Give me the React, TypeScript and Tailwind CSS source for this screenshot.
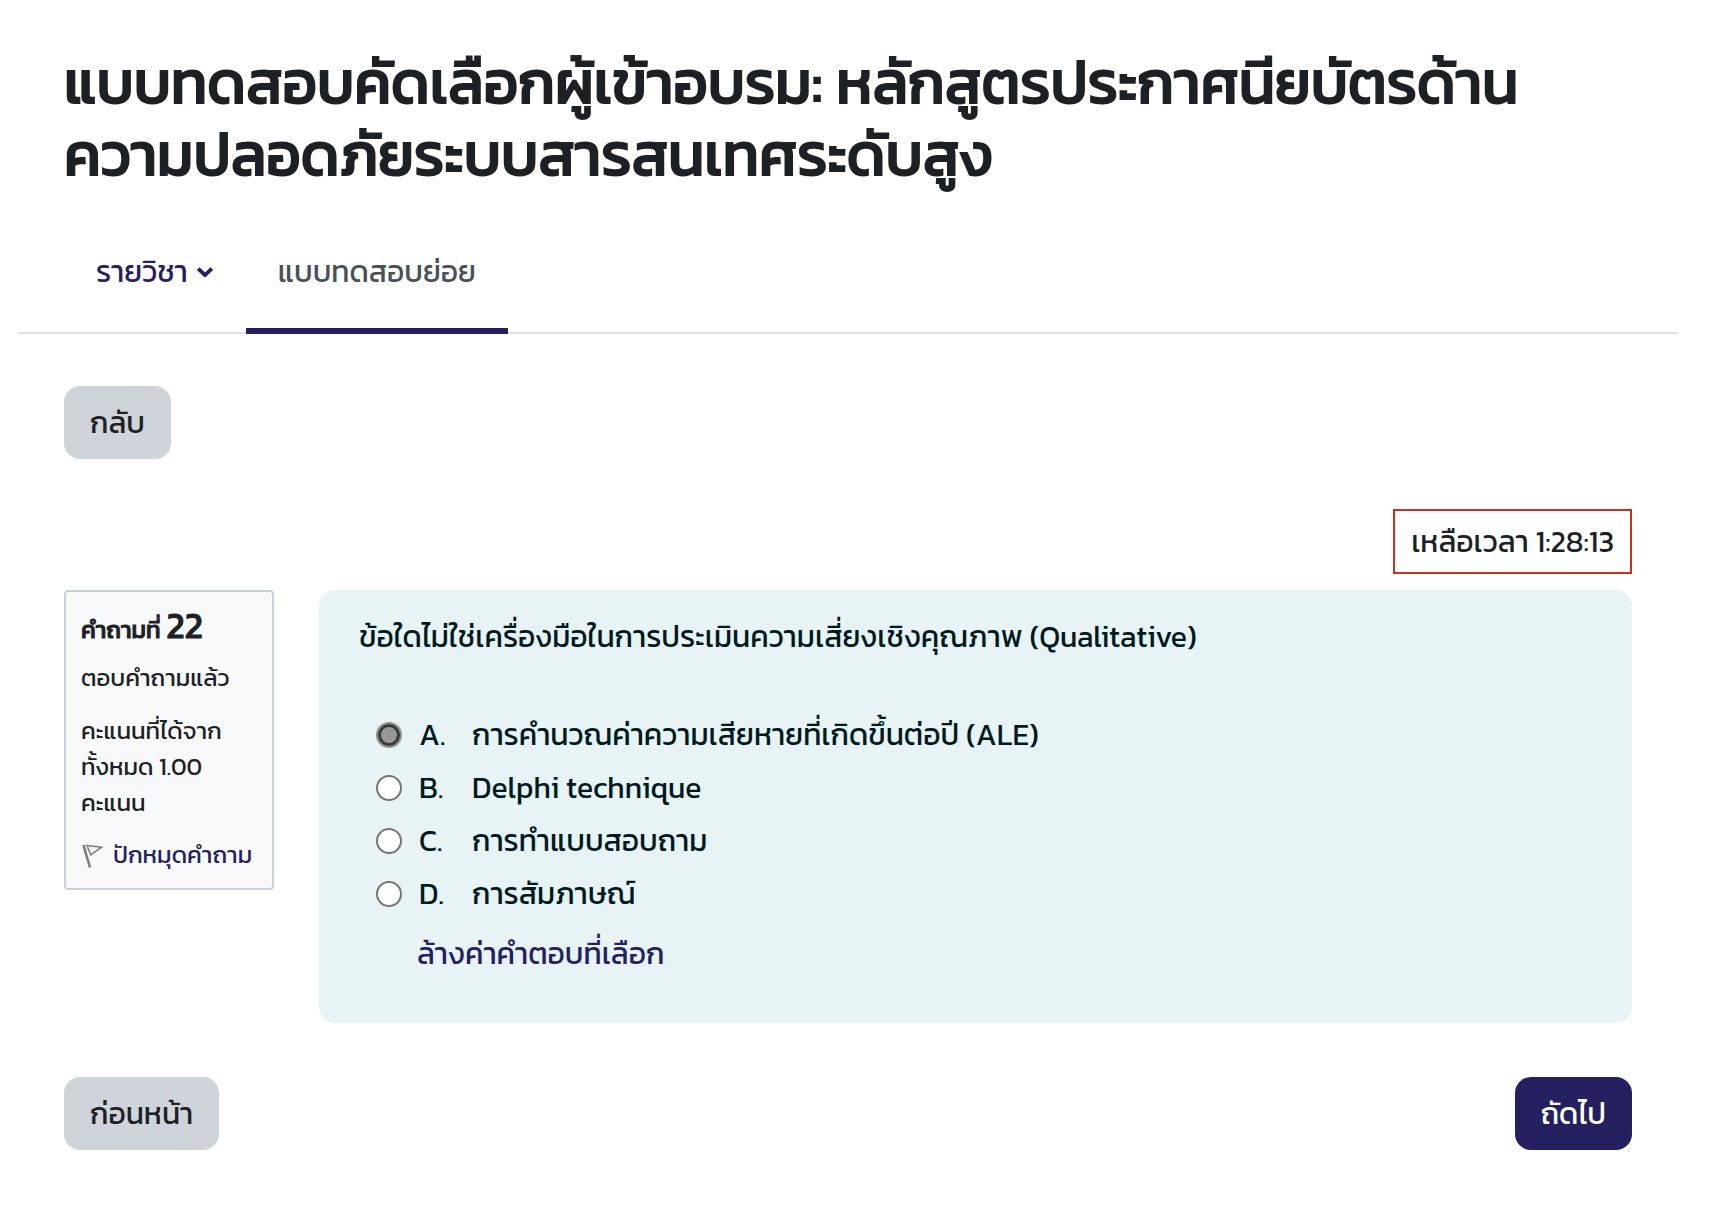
const answers = [
  { key: 'A', text: 'การคำนวณค่าความเสียหายที่เกิดขึ้นต่อปี (ALE)' },
  { key: 'B', text: 'Delphi technique' },
  { key: 'C', text: 'การทำแบบสอบถาม' },
  { key: 'D', text: 'การสัมภาษณ์' },
]

function ChevronIcon() {
  return (
    <svg width="18" height="18" viewBox="0 0 18 18" fill="none" stroke="currentColor" aria-hidden="true">
      <path d="M2.2 5.6 L9 12.2 L15.8 5.6" strokeWidth="3.8" strokeLinejoin="round" />
    </svg>
  )
}

function FlagIcon() {
  return (
    <svg width="24" height="26" viewBox="0 0 24 26" fill="none" stroke="#7d7d7d" aria-hidden="true">
      <path d="M2.4 3 L9 25.5" strokeWidth="2.6" />
      <path d="M4.4 3.2 L20.5 5.2 L9.8 12.8 L6.4 4.6" strokeWidth="1.6" />
    </svg>
  )
}

export default function App() {
  return (
    <div className="bg-white pb-20 font-['Kanit','Noto_Sans_Thai','Noto_Sans',sans-serif] text-[30px] leading-[45px] text-[#1d2125]">
      {/* Header */}
      <header className="mr-[90px] ml-16 pt-[46px]">
        <h1 className="text-[60px] leading-[72px] font-normal [-webkit-text-stroke:2px_#1d2125]">
          แบบทดสอบคัดเลือกผู้เข้าอบรม: หลักสูตรประกาศนียบัตรด้านความปลอดภัยระบบสารสนเทศระดับสูง
        </h1>
      </header>

      {/* Tabs */}
      <nav className="mr-11 ml-[18px] mt-[19px] flex border-b-2 border-[#dee2e6] pl-[46px]">
        <button type="button" className="-mb-0.5 flex h-[125px] items-center gap-2 px-8 text-[#25205f]">
          รายวิชา
          <ChevronIcon />
        </button>
        <a href="#quiz" className="-mb-0.5 flex h-[125px] items-center border-b-6 border-[#25205f] px-8 pt-1.5 text-[#495057]">
          แบบทดสอบย่อย
        </a>
      </nav>

      <main id="quiz" className="mr-[90px] ml-16 pt-[52px]">
        <button type="button" className="rounded-2xl bg-[#ced4da] px-[26px] py-3.5">
          กลับ
        </button>

        {/* Timer */}
        <div className="mt-[50px] mb-4 flex justify-end">
          <div className="border-2 border-[#ca3120] px-4 py-2">เหลือเวลา 1:28:13</div>
        </div>

        <div className="flex items-start gap-[45px]">
          {/* Question info */}
          <aside className="w-[210px] shrink-0 rounded border-2 border-[#cad0d7] bg-[#f8f9fa] p-[15px] text-2xl leading-9">
            <h2 className="mb-3 font-normal [-webkit-text-stroke:1px_#1d2125]">
              คำถามที่ <span className="text-4xl leading-9">22</span>
            </h2>
            <p className="mb-[17px]">ตอบคำถามแล้ว</p>
            <p className="mb-4">
              คะแนนที่ได้จาก
              <br />
              ทั้งหมด 1.00
              <br />
              คะแนน
            </p>
            <a href="#flag" className="flex items-center gap-2 whitespace-nowrap text-[#25205f]">
              <FlagIcon />
              ปักหมุดคำถาม
            </a>
          </aside>

          {/* Question */}
          <section className="grow rounded-2xl bg-[#e7f3f5] px-10 pt-6 pb-[47px] text-[#001a1e]">
            <fieldset>
              <legend className="mb-[53px]">ข้อใดไม่ใช่เครื่องมือในการประเมินความเสี่ยงเชิงคุณภาพ (Qualitative)</legend>
              <div className="flex flex-col gap-2 pl-[17px]">
                {answers.map(({ key, text }) => (
                  <label key={key} className="flex items-center gap-[17px]">
                    <input
                      type="radio"
                      name="answer"
                      value={key}
                      defaultChecked={key === 'A'}
                      className="h-[26px] w-[26px] shrink-0 appearance-none rounded-full border-2 border-[#767676] bg-white checked:border-[#8f8f8f] checked:bg-[#979797] checked:inset-ring-3 checked:inset-ring-[#3b3b3b]"
                    />
                    <span className="flex">
                      <span className="w-[53px]">{key}.</span>
                      {text}
                    </span>
                  </label>
                ))}
              </div>
            </fieldset>
            <a href="#clear" className="mt-[15px] ml-[58px] inline-block align-top text-[#25205f]">
              ล้างค่าคำตอบที่เลือก
            </a>
          </section>
        </div>

        <div className="mt-[54px] flex justify-between">
          <button type="button" className="rounded-2xl bg-[#ced4da] px-[26px] py-3.5">
            ก่อนหน้า
          </button>
          <button type="button" className="rounded-2xl bg-[#25205f] px-[26px] py-3.5 text-white">
            ถัดไป
          </button>
        </div>
      </main>
    </div>
  )
}
